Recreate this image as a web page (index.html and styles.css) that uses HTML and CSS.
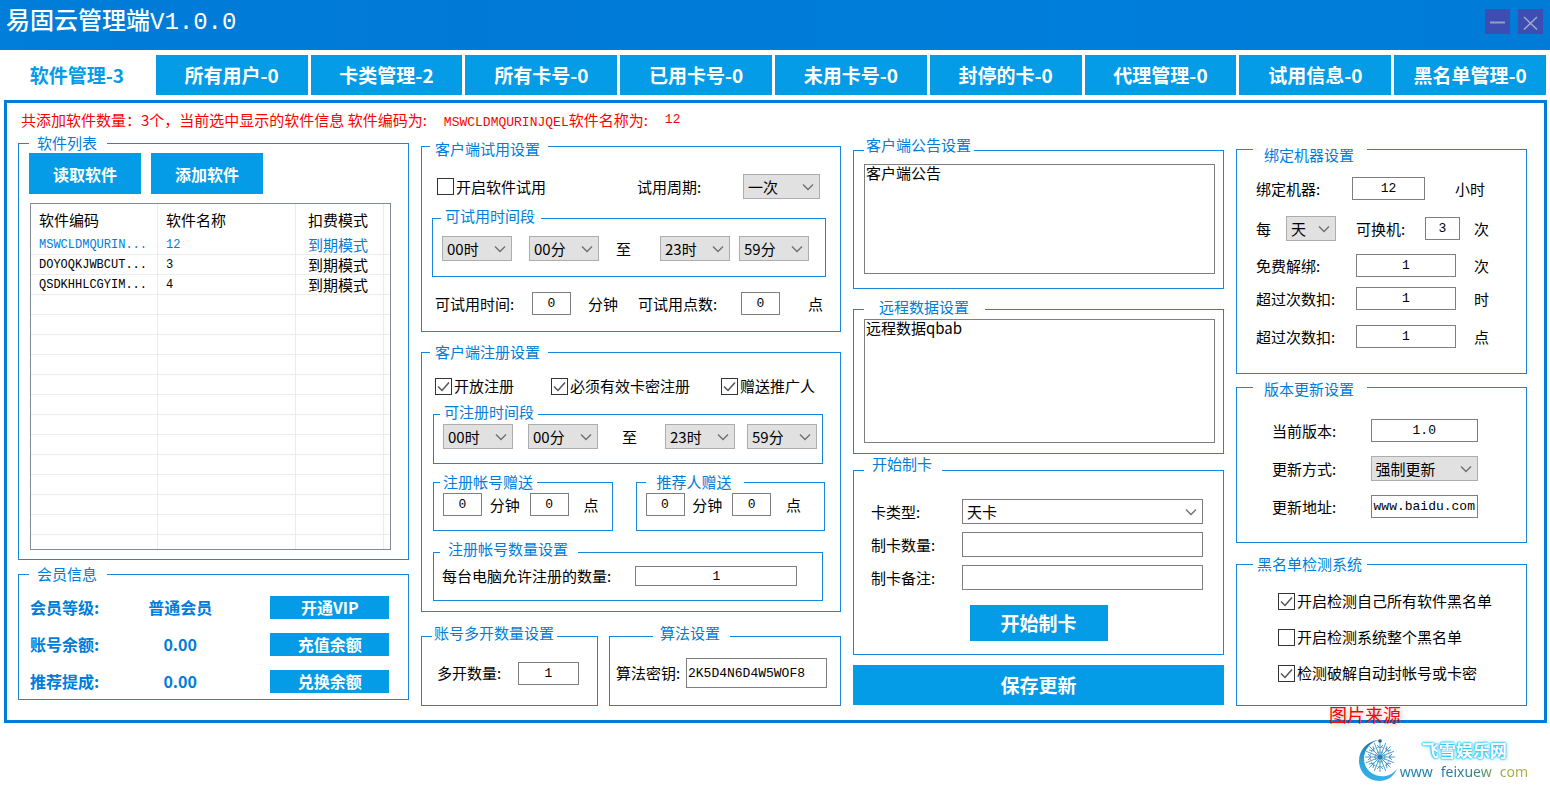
FILE: index.html
```html
<!DOCTYPE html>
<html lang="zh-CN">
<head>
<meta charset="utf-8">
<title>易固云管理端V1.0.0</title>
<link rel="stylesheet" href="styles.css">
</head>
<body>
<header class="titlebar">
  <h1 class="title">易固云管理端V1.0.0</h1>
  <div class="window-buttons">
    <button type="button" class="win-btn" aria-label="最小化"><svg width="25" height="25" viewBox="0 0 25 25"><path d="M5 13.5H20" stroke="#9a9cc6" stroke-width="2"/></svg></button>
    <button type="button" class="win-btn" aria-label="关闭"><svg width="25" height="25" viewBox="0 0 25 25"><path d="M6 8L19 20.500M19 8L6 20.500" stroke="#a3a6cc" stroke-width="1.600"/></svg></button>
  </div>
</header>

<nav class="tabs">
  <button type="button" class="tab active">软件管理-3</button>
  <button type="button" class="tab">所有用户-0</button>
  <button type="button" class="tab">卡类管理-2</button>
  <button type="button" class="tab">所有卡号-0</button>
  <button type="button" class="tab">已用卡号-0</button>
  <button type="button" class="tab">未用卡号-0</button>
  <button type="button" class="tab">封停的卡-0</button>
  <button type="button" class="tab">代理管理-0</button>
  <button type="button" class="tab">试用信息-0</button>
  <button type="button" class="tab">黑名单管理-0</button>
</nav>

<main class="panel">
  <p class="status"><span>共添加软件数量：3个，当前选中显示的软件信息 软件编码为:</span><span><span class="mono">MSWCLDMQURINJQEL</span>软件名称为:</span><span class="mono">12</span></p>

  <div class="columns">
    <div class="col">
      <fieldset class="group list-group">
        <legend class="lg-side">软件列表</legend>
        <div class="actions">
          <button type="button" class="btn btn-action">读取软件</button>
          <button type="button" class="btn btn-action">添加软件</button>
        </div>
        <div class="table-box">
          <table class="soft-table">
            <colgroup><col class="c-code"><col class="c-name"><col class="c-mode"><col></colgroup>
            <thead><tr><th>软件编码</th><th>软件名称</th><th>扣费模式</th><th></th></tr></thead>
            <tbody>
              <tr class="selected"><td class="mono">MSWCLDMQURIN...</td><td class="mono">12</td><td>到期模式</td><td></td></tr>
              <tr><td class="mono">DOYOQKJWBCUT...</td><td class="mono">3</td><td>到期模式</td><td></td></tr>
              <tr><td class="mono">QSDKHHLCGYIM...</td><td class="mono">4</td><td>到期模式</td><td></td></tr>
              <tr><td></td><td></td><td></td><td></td></tr>
              <tr><td></td><td></td><td></td><td></td></tr>
              <tr><td></td><td></td><td></td><td></td></tr>
              <tr><td></td><td></td><td></td><td></td></tr>
              <tr><td></td><td></td><td></td><td></td></tr>
              <tr><td></td><td></td><td></td><td></td></tr>
              <tr><td></td><td></td><td></td><td></td></tr>
              <tr><td></td><td></td><td></td><td></td></tr>
              <tr><td></td><td></td><td></td><td></td></tr>
              <tr><td></td><td></td><td></td><td></td></tr>
              <tr><td></td><td></td><td></td><td></td></tr>
              <tr><td></td><td></td><td></td><td></td></tr>
              <tr class="last"><td></td><td></td><td></td><td></td></tr>
            </tbody>
          </table>
        </div>
      </fieldset>

      <fieldset class="group member-group">
        <legend class="lg-side">会员信息</legend>
        <div class="member-row"><span>会员等级:</span><span class="value">普通会员</span><button type="button" class="btn btn-member">开通VIP</button></div>
        <div class="member-row"><span>账号余额:</span><span class="value">0.00</span><button type="button" class="btn btn-member">充值余额</button></div>
        <div class="member-row"><span>推荐提成:</span><span class="value">0.00</span><button type="button" class="btn btn-member">兑换余额</button></div>
      </fieldset>
    </div>

    <div class="col">
      <fieldset class="group trial-group">
        <legend class="lg-trial">客户端试用设置</legend>
        <div class="row trial-top">
          <label class="check"><input type="checkbox">开启软件试用</label>
          <label for="trial-cycle">试用周期:</label>
          <select id="trial-cycle" class="w-cycle"><option>一次</option></select>
        </div>
        <fieldset class="group inner trial-time">
          <legend class="lg-inner">可试用时间段</legend>
          <div class="row trial-range">
            <select class="w-time" aria-label="试用开始时"><option>00时</option></select>
            <select class="w-time" aria-label="试用开始分"><option>00分</option></select>
            <span>至</span>
            <select class="w-time" aria-label="试用结束时"><option>23时</option></select>
            <select class="w-time" aria-label="试用结束分"><option>59分</option></select>
          </div>
        </fieldset>
        <div class="row trial-amount">
          <label for="trial-min">可试用时间:</label>
          <input id="trial-min" type="text" class="w-num" value="0">
          <span>分钟</span>
          <label for="trial-pts">可试用点数:</label>
          <input id="trial-pts" type="text" class="w-num" value="0">
          <span>点</span>
        </div>
      </fieldset>

      <fieldset class="group reg-group">
        <legend class="lg-reg">客户端注册设置</legend>
        <div class="row reg-checks">
          <label class="check"><input type="checkbox" checked>开放注册</label>
          <label class="check"><input type="checkbox" checked>必须有效卡密注册</label>
          <label class="check"><input type="checkbox" checked>赠送推广人</label>
        </div>
        <fieldset class="group inner reg-time">
          <legend class="lg-inner lg-tight">可注册时间段</legend>
          <div class="row reg-range">
            <select class="w-time" aria-label="注册开始时"><option>00时</option></select>
            <select class="w-time" aria-label="注册开始分"><option>00分</option></select>
            <span>至</span>
            <select class="w-time" aria-label="注册结束时"><option>23时</option></select>
            <select class="w-time" aria-label="注册结束分"><option>59分</option></select>
          </div>
        </fieldset>
        <div class="gifts">
          <fieldset class="group inner gift">
            <legend class="lg-gift">注册帐号赠送</legend>
            <div class="row gift-row">
              <input type="text" class="w-num" value="0" aria-label="注册赠送分钟"><span>分钟</span>
              <input type="text" class="w-num" value="0" aria-label="注册赠送点"><span>点</span>
            </div>
          </fieldset>
          <fieldset class="group inner gift">
            <legend class="lg-refer">推荐人赠送</legend>
            <div class="row gift-row refer">
              <input type="text" class="w-num" value="0" aria-label="推荐赠送分钟"><span>分钟</span>
              <input type="text" class="w-num" value="0" aria-label="推荐赠送点"><span>点</span>
            </div>
          </fieldset>
        </div>
        <fieldset class="group inner reg-limit">
          <legend class="lg-limit">注册帐号数量设置</legend>
          <div class="row limit-row">
            <label for="reg-limit">每台电脑允许注册的数量:</label>
            <input id="reg-limit" type="text" class="w-limit" value="1">
          </div>
        </fieldset>
      </fieldset>

      <div class="bottom-pair">
        <fieldset class="group small-group">
          <legend class="lg-multi">账号多开数量设置</legend>
          <div class="row multi-row"><label for="multi">多开数量:</label><input id="multi" type="text" class="w-multi" value="1"></div>
        </fieldset>
        <fieldset class="group small-group">
          <legend class="lg-algo">算法设置</legend>
          <div class="row algo-row"><label for="algo">算法密钥:</label><input id="algo" type="text" class="w-key" value="2K5D4N6D4W5WOF8"></div>
        </fieldset>
      </div>
    </div>

    <div class="col col-notice">
      <fieldset class="group notice-group">
        <legend class="lg-notice">客户端公告设置</legend>
        <textarea class="area area-notice" aria-label="客户端公告">客户端公告</textarea>
      </fieldset>
      <fieldset class="group remote-group">
        <legend class="lg-remote">远程数据设置</legend>
        <textarea class="area area-remote" aria-label="远程数据">远程数据qbab</textarea>
      </fieldset>
      <fieldset class="group card-group">
        <legend class="lg-card">开始制卡</legend>
        <div class="card-form">
          <label for="card-type">卡类型:</label><select id="card-type" class="plain"><option>天卡</option></select>
          <label for="card-num">制卡数量:</label><input id="card-num" type="text">
          <label for="card-note">制卡备注:</label><input id="card-note" type="text">
        </div>
        <button type="button" class="btn btn-card">开始制卡</button>
      </fieldset>
      <button type="button" class="btn btn-save">保存更新</button>
    </div>

    <div class="col">
      <fieldset class="group bind-group">
        <legend class="lg-bind">绑定机器设置</legend>
        <div class="row bind-hours"><label for="bind-h">绑定机器:</label><input id="bind-h" type="text" class="w-hours" value="12"><span>小时</span></div>
        <div class="row bind-swap"><label for="bind-unit">每</label><select id="bind-unit" class="w-unit"><option>天</option></select><label for="bind-n">可换机:</label><input id="bind-n" type="text" class="w-swap" value="3"><span>次</span></div>
        <div class="row bind-line free"><label for="free-n">免费解绑:</label><input id="free-n" type="text" class="w-100" value="1"><span>次</span></div>
        <div class="row bind-line over"><label for="over-h">超过次数扣:</label><input id="over-h" type="text" class="w-100" value="1"><span>时</span></div>
        <div class="row bind-line points"><label for="over-p">超过次数扣:</label><input id="over-p" type="text" class="w-100" value="1"><span>点</span></div>
      </fieldset>
      <fieldset class="group version-group">
        <legend class="lg-version">版本更新设置</legend>
        <div class="version-form">
          <label for="ver">当前版本:</label><input id="ver" type="text" value="1.0">
          <label for="ver-mode">更新方式:</label><select id="ver-mode"><option>强制更新</option></select>
          <label for="ver-url">更新地址:</label><input id="ver-url" type="text" value="www.baidu.com">
        </div>
      </fieldset>
      <fieldset class="group black-group">
        <legend class="lg-black">黑名单检测系统</legend>
        <div class="black-list">
          <label class="check"><input type="checkbox" checked>开启检测自己所有软件黑名单</label>
          <label class="check"><input type="checkbox">开启检测系统整个黑名单</label>
          <label class="check"><input type="checkbox" checked>检测破解自动封帐号或卡密</label>
        </div>
      </fieldset>
    </div>
  </div>
  <span class="source">图片来源</span>
</main>

<footer class="brand">
  <svg class="brand-logo" width="42" height="44" viewBox="0 0 42 44" aria-hidden="true">
    <defs><linearGradient id="moon" x1="0" y1="0" x2="0" y2="1"><stop offset="0" stop-color="#1b6fa8"/><stop offset=".5" stop-color="#2aa5dc"/><stop offset="1" stop-color="#35b0e6"/></linearGradient></defs>
    <path d="M21 2C9 3 1 12 1 23C1 34 10 43 21 43C30 43 36 38 39 31C34 37 28 39 22 38C13 37 6 30 6 21C6 12 12 4 21 2Z" fill="url(#moon)"/>
    <circle cx="22" cy="3" r="1.800" fill="#1b5f98"/>
    <g stroke="#4f9fca" stroke-width="1" fill="none">
      <path d="M22 4V34M7 19H37M11.400 8.400L32.600 29.600M32.600 8.400L11.400 29.600M16.300 5.100L27.700 32.900M27.700 5.100L16.300 32.900M8.100 13.300L35.900 24.700M8.100 24.700L35.900 13.300"/>
      <path d="M19 7L22 10L25 7M19 31L22 28L25 31M10 16L13 19L10 22M34 16L31 19L34 22M15 8L16 13L11 12M33 12L28 13L29 8M11 26L16 25L15 30M29 30L28 25L33 26"/>
      <circle cx="22" cy="19" r="5"/><circle cx="22" cy="19" r="10" stroke-dasharray="2 2"/>
    </g>
    <circle cx="22" cy="19" r="2.500" fill="#2c7fb2"/>
  </svg>
  <div class="brand-text">
    <strong>飞雪娱乐网</strong>
    <span class="brand-url"><span>www</span><span>feixuew</span><span>com</span></span>
  </div>
</footer>
</body>
</html>
```

FILE: styles.css
```css
* { box-sizing: border-box; }

:root {
  --blue: #007ddb;
  --line: #1787de;
  --btn: #049be7;
  --cjk: "Noto Sans CJK SC", "Noto Sans", sans-serif;
  --mono: "Liberation Mono", "Noto Sans CJK SC", monospace;
}

body {
  margin: 0;
  background: #fff;
  color: #000;
  font: 15px/20px var(--cjk);
}

button, input, select, textarea { font: inherit; color: inherit; margin: 0; border-radius: 0; }
button { border: 0; padding: 0; }

/* title bar */
.titlebar {
  display: flex;
  justify-content: space-between;
  align-items: flex-start;
  height: 50px;
  padding: 0 7px 0 6px;
  background: linear-gradient(90deg, #007ed9, #0079d6 30%, #007edb 70%, #007bd8);
}
.title { margin: 7px 0 0; font: 500 24px/32px var(--mono); color: #fff; }
.window-buttons { display: flex; gap: 8px; margin-top: 9px; }
.win-btn { width: 25px; height: 25px; background: #3c4eb2; }
.win-btn svg { display: block; }

/* tabs */
.tabs {
  display: grid;
  grid-template-columns: repeat(10, 1fr);
  gap: 3px;
  padding: 5px 4px 5px 1px;
}
.tab { height: 40px; background: var(--btn); color: #fff; font: bold 19px/24px var(--cjk); white-space: nowrap; }
.tab.active { background: #fff; color: var(--btn); }

/* main panel */
.panel {
  position: relative;
  margin: 0 3px 0 4px;
  padding: 7px 17px 14px 11px;
  border: 3px solid var(--blue);
}
.status { display: flex; gap: 17px; height: 20px; margin: 0 0 3px; padding: 0 4px 0 3px; color: #f00; white-space: nowrap; }
.mono { font-family: var(--mono); font-size: 12px; }
.status .mono { font-size: 13px; }

.columns { display: grid; grid-template-columns: 391fr 420fr 371fr 291fr; column-gap: 12px; align-items: start; }
.col { display: flex; flex-direction: column; min-width: 0; }

.group { min-width: 0; margin: 0; padding: 0; border: 1px solid var(--line); }
.group > legend { color: var(--blue); white-space: nowrap; }
.inner > legend { line-height: 16px; }

.lg-side { padding: 0 10px 0 8px; }
.lg-trial { margin-left: 8px; padding: 6px 8px 0 5px; }
.lg-reg { margin-left: 8px; padding: 0 8px 0 5px; }
.lg-inner { margin-left: 8px; padding: 0 6px 4px 4px; }
.lg-tight { margin-left: 6px; padding-right: 4px; }
.lg-gift { margin-left: 6px; padding: 0 4px 0 3px; }
.lg-refer { margin-left: 9px; padding: 0 12px 0 11px; }
.lg-limit { margin-left: 6px; padding: 0 10px 6px 8px; }
.lg-multi { margin-left: 10px; padding: 0 3px 6px 2px; }
.lg-algo { margin-left: 43px; padding: 0 10px 6px 7px; }
.lg-notice { padding: 0 3px 10px 2px; line-height: 18px; }
.lg-remote { padding: 0 16px 4px 15px; line-height: 16px; }
.lg-card { margin-left: 10px; padding: 0 10px 12px 8px; line-height: 16px; }
.lg-bind { margin-left: 16px; padding: 12px 13px 0 11px; }
.lg-version { margin-left: 16px; padding: 4px 13px 0 11px; line-height: 16px; }
.lg-black { margin-left: 16px; padding: 0 5px 0 4px; }

/* controls */
input[type="text"], .area {
  border: 1px solid #7f7f7f;
  background: #fff;
  outline: 0;
}
input[type="text"] {
  height: 23px;
  padding: 0 1px;
  font: 13px/16px var(--mono);
  text-align: center;
  min-width: 0;
}
.area { display: block; width: 100%; padding: 0 1px; line-height: 16px; resize: none; }
select {
  height: 25px;
  padding: 0 18px 0 4px;
  border: 1px solid #adadad;
  background: #e1e1e1 url("data:image/svg+xml,%3Csvg xmlns='http://www.w3.org/2000/svg' width='12' height='8' viewBox='0 0 12 8'%3E%3Cpath d='M1 1.500L6 6.500L11 1.500' fill='none' stroke='%23707070' stroke-width='1.400'/%3E%3C/svg%3E") no-repeat right 5px center;
  appearance: none;
  line-height: 20px;
}
select.plain { border-color: #7f7f7f; background-color: #fff; }
.check { display: flex; align-items: center; gap: 2px; white-space: nowrap; }
.check input {
  flex: none;
  width: 17px;
  height: 17px;
  appearance: none;
  border: 1px solid #333;
  background: #fff;
}
.check input:checked {
  background: url("data:image/svg+xml,%3Csvg xmlns='http://www.w3.org/2000/svg' width='15' height='15' viewBox='0 0 15 15'%3E%3Cpath d='M2 7.500L6 11.500L13 3.500' fill='none' stroke='%23555' stroke-width='1.500'/%3E%3C/svg%3E") center no-repeat;
}
.btn { background: var(--btn); color: #fff; font-weight: bold; white-space: nowrap; }

.w-time { width: 70px; }
.w-cycle { width: 77px; }
.w-num { width: 39px; }
.w-limit { width: 162px; }
.w-multi { width: 61px; }
.w-key { width: 141px; }
.w-hours { width: 73px; }
.w-unit { width: 50px; }
.w-swap { width: 35px; }
.w-100 { width: 100px; }

.row { display: grid; align-items: center; justify-items: start; white-space: nowrap; }

/* software list */
.list-group { padding: 0 17px 9px 10px; }
.actions { display: flex; gap: 10px; }
.btn-action { width: 112px; height: 41px; font-size: 16px; }
.table-box { margin: 9px 0 0 1px; height: 347px; border: 1px solid #858b93; overflow: hidden; }
.soft-table { width: 100%; table-layout: fixed; border-collapse: separate; border-spacing: 0; }
.c-code { width: 127px; }
.c-name { width: 138px; }
.c-mode { width: 88px; }
.soft-table th, .soft-table td {
  padding: 0 0 0 8px;
  border-right: 1px solid #ececec;
  text-align: left;
  font-weight: normal;
  white-space: nowrap;
}
.soft-table th { height: 31px; }
.soft-table td { height: 20px; line-height: 18px; border-bottom: 1px solid #ececec; }
.soft-table td:nth-child(3), .soft-table th:nth-child(3) { padding-left: 12px; }
.soft-table th:last-child, .soft-table td:last-child { border-right: 0; padding: 0; }
.soft-table .last td { height: 14px; border-bottom: 0; }
.selected { color: var(--blue); }

/* member info */
.member-group { margin-top: 4px; padding: 12px 0 6px 10px; }
.member-row {
  display: grid;
  grid-template-columns: 118fr 123fr 138fr;
  align-items: center;
  padding-left: 1px;
  color: var(--blue);
  font: bold 16px/23px var(--cjk);
}
.member-row + .member-row { margin-top: 14px; }
.member-row .value { width: 65px; text-align: center; white-space: nowrap; }
.btn-member { width: 119px; height: 23px; font: inherit; }

/* trial settings */
.trial-group { padding: 15px 0 16px; }
.trial-top { grid-template-columns: 200fr 106fr 97fr; padding-left: 15px; }
.trial-time { margin: 9px 14px 0 10px; padding: 8px 0 15px; }
.trial-range { grid-template-columns: 87fr 87fr 44fr 79fr 86fr; padding-left: 9px; }
.trial-amount { grid-template-columns: 97fr 56fr 50fr 103fr 67fr 32fr; margin-top: 15px; padding-left: 13px; }

/* registration settings */
.reg-group { margin-top: 10px; padding: 14px 0 10px; }
.reg-checks { grid-template-columns: 116fr 170fr 119fr; padding-left: 13px; }
.reg-time { margin: 8px 17px 0 11px; padding-bottom: 14px; }
.reg-range { grid-template-columns: 85fr 94fr 43fr 82fr 75fr; padding-left: 9px; }
.gifts { display: grid; grid-template-columns: 180fr 190fr; column-gap: 23px; margin: 10px 15px 0 11px; }
.gift { padding: 3px 0 14px; }
.gift-row { grid-template-columns: 47fr 40fr 54fr 28fr; padding-left: 9px; }
.gift-row.refer { grid-template-columns: 47fr 40fr 54fr 38fr; }
.reg-limit { margin: 10px 17px 0 11px; padding: 3px 0 14px; }
.limit-row { grid-template-columns: 194fr 187fr; padding-left: 8px; }
.limit-row input[type="text"] { height: 20px; }

.bottom-pair { display: grid; grid-template-columns: 177fr 232fr; column-gap: 11px; margin-top: 11px; }
.small-group { padding: 9px 0 17px; }
.multi-row { grid-template-columns: 81fr 79fr; height: 30px; padding-left: 15px; }
.algo-row { grid-template-columns: 70fr 154fr; height: 30px; padding-left: 6px; }
.algo-row input[type="text"] { height: 30px; text-align: left; }

/* notices and card making */
.col-notice { padding-top: 3px; }
.notice-group { padding: 0 8px 14px 10px; }
.area-notice { height: 110px; }
.remote-group { margin-top: 10px; padding: 0 8px 10px 10px; }
.area-remote { height: 124px; }
.card-group { margin-top: 2px; padding: 15px 0 13px; }
.card-form { display: grid; grid-template-columns: 91fr 241fr; row-gap: 8px; align-items: center; padding: 0 20px 0 17px; }
.card-form input[type="text"] { height: 25px; }
.btn-card { display: block; width: 138px; height: 36px; margin: 15px auto 0; font-size: 19px; }
.btn-save { height: 40px; margin-top: 10px; font-size: 19px; }

/* machine binding */
.bind-group { padding: 12px 0 25px; }
.bind-group .row { padding-left: 19px; }
.bind-hours { grid-template-columns: 96fr 103fr 71fr; }
.bind-swap { grid-template-columns: 30fr 70fr 69fr 49fr 52fr; margin-top: 16px; }
.bind-line { grid-template-columns: 100fr 118fr 52fr; }
.bind-line.free { margin-top: 13px; }
.bind-line.over { margin-top: 10px; }
.bind-line.points { margin-top: 15px; }

/* version update */
.version-group { margin-top: 3px; padding: 22px 0 24px; }
.version-form { display: grid; grid-template-columns: 99fr 108fr; row-gap: 14px; align-items: center; padding: 0 48px 0 35px; }

/* blacklist */
.black-group { margin-top: 11px; padding: 17px 0 22px; }
.black-list { display: flex; flex-direction: column; gap: 16px; padding-left: 41px; }

/* source caption and brand */
.source {
  position: absolute;
  right: 143px;
  bottom: -6px;
  font-size: 18px;
  line-height: 24px;
  color: #f00;
  text-shadow: 2px 2px 4px rgba(0, 0, 0, .25);
}
.brand { display: flex; justify-content: flex-end; padding: 15px 22px 0 0; }
.brand-text { display: flex; flex-direction: column; }
.brand-text strong {
  margin-left: 22px;
  font-size: 17px;
  line-height: 24px;
  color: #fff;
  text-shadow: 0 0 1px #12bdf0, 0 0 2px #12bdf0, 0 0 2px #12bdf0, 0 0 4px #5fdcff;
}
.brand-url {
  display: flex;
  gap: 8px;
  font: 14px/20px "Noto Sans", sans-serif;
  background: linear-gradient(90deg, #1586a8, #1e78ad 35%, #2b7f8f 55%, #8fae35 80%, #b9ad3f);
  background-clip: text;
  color: transparent;
}
```
